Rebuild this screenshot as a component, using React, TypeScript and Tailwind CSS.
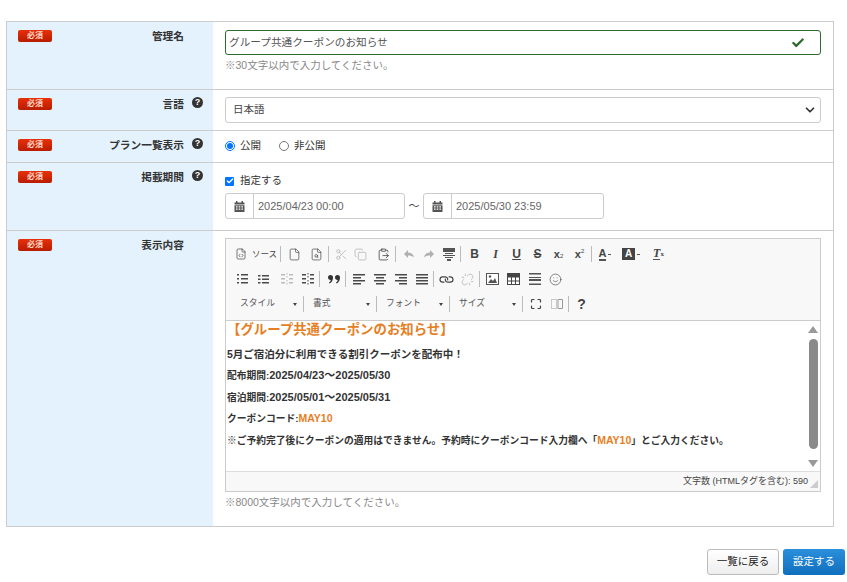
import type { ReactNode } from "react"
import {
  Check,
  ChevronDown,
  Copy,
  File,
  FileCode,
  FileSearch,
  ClipboardPaste,
  Link,
  Maximize,
  Scissors,
  Smile,
  Unlink,
} from "lucide-react"

const font = "[font-family:'Liberation_Sans','Noto_Sans_CJK_JP',sans-serif]"

function Required() {
  return (
    <span className="flex h-[12px] w-[34px] items-center justify-center rounded-[2px] bg-gradient-to-b from-[#e8300a] to-[#b81c00] text-[8px] font-bold leading-none text-[#ffd9cc]">
      必須
    </span>
  )
}

function Help() {
  return (
    <span className="flex h-[11px] w-[11px] items-center justify-center rounded-full bg-[#333] text-[9px] font-bold leading-none text-white">
      ?
    </span>
  )
}

function Row(props: { label: string; help?: boolean; className: string; children: ReactNode }) {
  const { label, help, className, children } = props
  return (
    <div className={`flex border-b border-[#ccc] last:border-b-0 ${className}`}>
      <div className="flex w-[206px] shrink-0 items-start bg-[#e3f2fd] pl-[11px] pt-[8px]">
        <Required />
        <div className="flex flex-1 items-center justify-end pr-[29px] text-[10.700px] font-bold leading-[12px] text-[#333]">
          <span className="relative">
            {label}
            {help ? (
              <span className="absolute left-[calc(100%+8px)] top-[-1px]">
                <Help />
              </span>
            ) : null}
          </span>
        </div>
      </div>
      <div className="min-w-0 flex-1 px-[12px] pt-[8px]">{children}</div>
    </div>
  )
}

function Calendar() {
  return (
    <svg width="11" height="11" viewBox="0 0 11 11" fill="#555">
      <rect x="2" y="0" width="1.5" height="2.5" />
      <rect x="7.5" y="0" width="1.5" height="2.5" />
      <rect x="0.5" y="1.5" width="10" height="2" />
      <path d="M.5 4.2h10V11H.5z M2 5.3v1.2h1.6V5.3z M4.7 5.3v1.2h1.6V5.3z M7.4 5.3v1.2H9V5.3z M2 7.6v1.2h1.6V7.6z M4.7 7.6v1.2h1.6V7.6z M7.4 7.6v1.2H9V7.6z" fillRule="evenodd" />
    </svg>
  )
}

function DateField(props: { value: string; width: string }) {
  return (
    <div className={`flex h-[26px] overflow-hidden rounded-[3px] border border-[#ccc] bg-white ${props.width}`}>
      <span className="flex w-[28px] shrink-0 items-center justify-center border-r border-[#ccc]">
        <Calendar />
      </span>
      <span className="flex items-center pl-[4px] text-[11px] text-[#666]">{props.value}</span>
    </div>
  )
}

function Btn(props: { children: ReactNode; className?: string }) {
  return (
    <span className={`flex h-[20px] w-[21px] shrink-0 items-center justify-center text-[#444] ${props.className ?? ""}`}>
      {props.children}
    </span>
  )
}

function Sep() {
  return <span className="ml-[1px] mr-[2px] h-[16px] w-px shrink-0 bg-[#bcbcbc]" />
}

function Combo(props: { label: string }) {
  return (
    <>
      <span className="flex h-[18px] w-[69px] shrink-0 items-center justify-between pl-[7px] pr-[5px] text-[8.750px] text-[#555]">
        <span>{props.label}</span>
        <span className="h-0 w-0 border-x-[2px] border-t-[3px] border-x-transparent border-t-[#444]" />
      </span>
      <span className="ml-[1px] mr-[2px] h-[16px] w-px shrink-0 bg-[#bcbcbc]" />
    </>
  )
}

const icon = { size: 13, strokeWidth: 1.8 }
const dim = { size: 13, strokeWidth: 1.6, className: "text-[#bbb]" }

function Arrow(props: { flip?: boolean }) {
  return (
    <svg width="12" height="10" viewBox="0 0 12 10" fill="#b0b0b0" className={props.flip ? "-scale-x-100" : ""}>
      <path d="M5 1 1 5l4 4V6.600c2.500 0 4.300.4 6 2C10.500 5.300 8.500 3.600 5 3.400z" />
    </svg>
  )
}

// bars for the align and list buttons: [x, width, y]
function Bars(props: { bars: number[][]; color?: string }) {
  return (
    <svg width="12" height="12" viewBox="0 0 12 12" fill={props.color ?? "#4a4a4a"}>
      {props.bars.map((b, i) => (
        <rect key={i} x={b[0]} y={b[2]} width={b[1]} height="1.500" />
      ))}
    </svg>
  )
}

function Toolbar() {
  return (
    <div className="flex h-[82px] flex-col border-b border-[#ccc] bg-[#f8f8f8] pl-[5px] pt-[5px]">
      <div className="flex h-[20px] items-center">
        <span className="flex w-[48px] shrink-0 items-center gap-[5px] pl-[4px] text-[8.500px] text-[#444]">
          <FileCode size={12} strokeWidth={1.4} className="shrink-0" />
          <span className="whitespace-nowrap">ソース</span>
        </span>
        <Sep />
        <Btn className="ml-[1px]"><File {...icon} strokeWidth={1.3} /></Btn>
        <Btn className="ml-[1px]"><FileSearch {...icon} strokeWidth={1.3} /></Btn>
        <Sep />
        <Btn><Scissors {...dim} /></Btn>
        <Btn className="-ml-[2px] mr-[2px]"><Copy {...dim} /></Btn>
        <Btn><ClipboardPaste {...icon} strokeWidth={1.5} /></Btn>
        <Sep />
        <Btn><Arrow /></Btn>
        <Btn className="-ml-[1px]"><Arrow flip /></Btn>
        <Btn className="-ml-[1px]">
          <svg width="12" height="13" viewBox="0 0 12 13" fill="#555">
            <path d="M0 0h12v4H0zM2 5h8v1H2zM0 7h12v1H0zM2 9h8v1H2zM4 11h4v2H4z" />
          </svg>
        </Btn>
        <Sep />
        <Btn className="ml-[1px] text-[12px] font-bold">B</Btn>
        <Btn className="font-['Liberation_Serif'] text-[12px] font-bold italic">I</Btn>
        <Btn className="text-[12px] font-bold underline">U</Btn>
        <Btn className="text-[12px] font-bold line-through">S</Btn>
        <Btn className="text-[11px] font-bold">
          x<sub className="text-[6px] font-normal">2</sub>
        </Btn>
        <Btn className="text-[11px] font-bold">
          x<sup className="text-[6px] font-normal">2</sup>
        </Btn>
        <Sep />
        <span className="flex w-[22px] shrink-0 items-center justify-center gap-[2px]">
          <span className="border-b-[2px] border-[#555] text-[11px] font-bold leading-[12px] text-[#444]">A</span>
          <span className="h-px w-[3px] bg-[#555]" />
        </span>
        <span className="ml-[3px] flex w-[24px] shrink-0 items-center justify-center gap-[2px]">
          <span className="flex h-[12px] w-[13px] items-center justify-center bg-[#444] text-[10px] font-bold leading-none text-white">A</span>
          <span className="h-px w-[3px] bg-[#555]" />
        </span>
        <span className="ml-[2px]"><Sep /></span>
        <Btn className="font-['Liberation_Serif'] text-[12px] font-bold italic">
          <span className="border-b border-[#555] leading-[11px]">T</span>
          <span className="text-[7px] not-italic">x</span>
        </Btn>
      </div>
      <div className="mt-[5px] flex h-[20px] items-center">
        <Btn>
          <Bars bars={[[5, 7, 1], [5, 7, 5], [5, 7, 9], [1, 2, 1], [1, 2, 5], [1, 2, 9]]} />
        </Btn>
        <Btn>
          <Bars bars={[[5, 7, 2], [5, 7, 5.500], [5, 7, 9], [1, 2.500, 2], [1, 2.500, 5.500], [1, 2.500, 9]]} />
        </Btn>
        <span className="ml-[1px]"><Sep /></span>
        <Btn className="-ml-[1px]">
          <Bars color="#bbb" bars={[[0, 4, 1], [0, 4, 5], [0, 4, 9], [8, 4, 1], [8, 4, 5], [8, 4, 9], [5.500, 1, 0], [5.500, 1, 3], [5.500, 1, 7], [5.500, 1, 10]]} />
        </Btn>
        <Btn>
          <Bars bars={[[0, 4, 1], [0, 4, 5], [0, 4, 9], [8, 4, 1], [8, 4, 5], [8, 4, 9], [5.500, 1, 0], [5.500, 1, 3], [5.500, 1, 7], [5.500, 1, 10]]} />
        </Btn>
        <Sep />
        <Btn className="ml-[1px]">
          <svg width="12" height="9" viewBox="0 0 12 9" fill="#333">
            <path d="M0 2.500a2.400 2.400 0 1 1 5 0C5 5 4 7.500 1.500 8.500L1 7.700C2 7 2.600 6 2.700 5 1.100 5 0 3.900 0 2.500z" />
            <path d="M7 2.500a2.400 2.400 0 1 1 5 0c0 2.500-1 5-3.500 6L8 7.700C9 7 9.600 6 9.700 5 8.100 5 7 3.900 7 2.500z" />
          </svg>
        </Btn>
        <Sep />
        <Btn><Bars bars={[[0, 12, 1], [0, 8, 4], [0, 12, 7], [0, 8, 10]]} /></Btn>
        <Btn><Bars bars={[[0, 12, 1], [2, 8, 4], [0, 12, 7], [2, 8, 10]]} /></Btn>
        <Btn><Bars bars={[[0, 12, 1], [4, 8, 4], [0, 12, 7], [4, 8, 10]]} /></Btn>
        <Btn><Bars bars={[[0, 12, 1], [0, 12, 4], [0, 12, 7], [0, 12, 10]]} /></Btn>
        <Sep />
        <Btn><Link {...icon} strokeWidth={2.2} className="rotate-45" /></Btn>
        <Btn><Unlink {...dim} /></Btn>
        <Sep />
        <Btn>
          <svg width="13" height="12" viewBox="0 0 13 12">
            <rect x="0.500" y="0.500" width="12" height="11" fill="#fff" stroke="#555" />
            <path d="M2 10l3-4 2 2 2-3 2 5z" fill="#555" />
            <circle cx="4" cy="3.500" r="1.200" fill="#555" />
          </svg>
        </Btn>
        <Btn>
          <svg width="13" height="12" viewBox="0 0 13 12" fill="#fff" stroke="#444">
            <rect x="0.500" y="0.500" width="12" height="11" />
            <path d="M.5 4h12M.5 8h12M4.500 4v8M8.500 4v8" fill="none" />
            <rect x="0.500" y="0.500" width="12" height="3" fill="#444" />
          </svg>
        </Btn>
        <Btn>
          <svg width="12" height="12" viewBox="0 0 12 12" fill="#555">
            <path d="M0 0h12v1.500H0zM0 4h12v1H0zM0 6h12v2H0zM0 10.500h12V12H0z" />
          </svg>
        </Btn>
        <Btn><Smile {...icon} strokeWidth={1.2} /></Btn>
      </div>
      <div className="ml-[2px] mt-[5px] flex h-[20px] items-center">
        <Combo label="スタイル" />
        <Combo label="書式" />
        <Combo label="フォント" />
        <Combo label="サイズ" />
        <Btn><Maximize size={12} strokeWidth={2.4} /></Btn>
        <Btn>
          <svg width="12" height="12" viewBox="0 0 12 12" fill="none" stroke="#999">
            <path d="M.5 1.500h5v9h-5z" strokeDasharray="1 1" />
            <path d="M7 1.500h4.500v9H7z" />
          </svg>
        </Btn>
        <Sep />
        <Btn className="text-[14px] font-bold">?</Btn>
      </div>
    </div>
  )
}

function Scrollbar() {
  return (
    <div className="flex h-full w-[14px] shrink-0 flex-col items-center pt-[5px]">
      <span className="h-0 w-0 border-x-[5px] border-b-[7px] border-x-transparent border-b-[#999]" />
      <span className="mt-[6px] h-[110px] w-[9px] rounded-[5px] bg-[#8a8a8a]" />
      <span className="mt-[11px] h-0 w-0 border-x-[5px] border-t-[7px] border-x-transparent border-t-[#999]" />
    </div>
  )
}

function Latin(props: { children: ReactNode; orange?: boolean }) {
  return <span className={`text-[10.500px] ${props.orange ? "text-[#e67e22]" : ""}`}>{props.children}</span>
}

function Dates(props: { children: ReactNode }) {
  return <span className="text-[11px]">{props.children}</span>
}

function Editor() {
  return (
    <div className="-mt-px h-[254px] border border-[#ccc]">
      <Toolbar />
      <div className="flex h-[150px] overflow-hidden bg-white">
        <div className="min-w-0 flex-1 pl-[1px] font-bold text-[#333]">
          <p className="mt-[1px] text-[13.400px] leading-[15px] text-[#e67e22]">【グループ共通クーポンのお知らせ】</p>
          <p className="mt-[9px] text-[10.500px] leading-[16px]">5月ご宿泊分に利用できる割引クーポンを配布中！</p>
          <p className="mt-[6px] text-[9.750px] leading-[14px]">
            配布期間:<Dates>2025/04/23～2025/05/30</Dates>
          </p>
          <p className="mt-[7px] text-[9.750px] leading-[14px]">
            宿泊期間:<Dates>2025/05/01～2025/05/31</Dates>
          </p>
          <p className="mt-[6px] text-[9.750px] leading-[14px]">
            クーポンコード:<Latin orange>MAY10</Latin>
          </p>
          <p className="mt-[7px] whitespace-nowrap text-[9.750px] leading-[14px]">
            ※ご予約完了後にクーポンの適用はできません。予約時にクーポンコード入力欄へ「<Latin orange>MAY10</Latin>」とご入力ください。
          </p>
        </div>
        <Scrollbar />
      </div>
      <div className="flex h-[20px] items-center justify-end gap-[2px] border-t border-[#ddd] bg-[#f8f8f8] pr-[2px] text-[9px] text-[#444]">
        <span>文字数 (HTMLタグを含む): 590</span>
        <svg width="8" height="8" viewBox="0 0 8 8" fill="#ccc" className="mt-[4px]">
          <path d="M8 0v8H0z" />
        </svg>
      </div>
    </div>
  )
}

export default function App() {
  return (
    <div className={`h-[582px] w-[847px] overflow-hidden bg-white pl-[6px] pt-[21px] ${font}`}>
      <div className="w-[828px] border border-[#ccc]">
        <Row label="管理名" className="h-[68px]">
          <div className="flex h-[25px] items-center justify-between rounded-[3px] border border-[#2e6b2e] pl-[3px] pr-[15px] text-[10.650px] text-[#555]">
            <span>グループ共通クーポンのお知らせ</span>
            <Check size={14} strokeWidth={4} className="text-[#2e6b2e]" />
          </div>
          <p className="mt-[2px] text-[10.500px] leading-[16px] text-[#888]">※30文字以内で入力してください。</p>
        </Row>
        <Row label="言語" help className="h-[41px]">
          <div className="-mt-px flex h-[26px] items-center justify-between rounded-[3px] border border-[#ccc] pl-[7px] pr-[3px] text-[10.500px] text-[#444]">
            <span>日本語</span>
            <ChevronDown size={14} strokeWidth={3} className="text-[#333]" />
          </div>
        </Row>
        <Row label="プラン一覧表示" help className="h-[32px]">
          <div className="flex h-[14px] items-center text-[10.500px] text-[#333]">
            <span className="flex h-[10px] w-[10px] items-center justify-center rounded-full border border-[#0075ff]">
              <span className="h-[6px] w-[6px] rounded-full bg-[#0075ff]" />
            </span>
            <span className="ml-[5px]">公開</span>
            <span className="ml-[18px] h-[10px] w-[10px] rounded-full border border-[#777]" />
            <span className="ml-[5px]">非公開</span>
          </div>
        </Row>
        <Row label="掲載期間" help className="h-[68px]">
          <div className="mt-[2px] flex h-[16px] items-center text-[10.500px] text-[#333]">
            <span className="flex h-[9px] w-[9px] items-center justify-center rounded-[1px] bg-[#0075ff]">
              <Check size={8} strokeWidth={4} className="text-white" />
            </span>
            <span className="ml-[6px]">指定する</span>
          </div>
          <div className="mt-[4px] flex items-center">
            <DateField value="2025/04/23 00:00" width="w-[180px]" />
            <span className="w-[18px] text-center text-[11px] text-[#444]">～</span>
            <DateField value="2025/05/30 23:59" width="w-[181px]" />
          </div>
        </Row>
        <Row label="表示内容" className="h-[295px]">
          <Editor />
          <p className="mt-[2px] text-[10.500px] leading-[16px] text-[#888]">※8000文字以内で入力してください。</p>
        </Row>
      </div>
      <div className="mt-[22px] flex justify-end gap-[4px] pr-[2px] text-[10.500px]">
        <span className="flex h-[26px] w-[72px] items-center justify-center rounded-[3px] border border-[#bbb] bg-gradient-to-b from-white to-[#eee] text-[#222]">
          一覧に戻る
        </span>
        <span className="flex h-[26px] w-[62px] items-center justify-center rounded-[3px] bg-gradient-to-b from-[#2b8fdc] to-[#0f6fbd] text-white">
          設定する
        </span>
      </div>
    </div>
  )
}
